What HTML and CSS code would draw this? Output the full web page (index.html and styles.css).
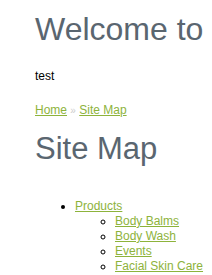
FILE: index.html
```html
<!DOCTYPE html>
<html>
<head>
<meta charset="utf-8">
<link rel="stylesheet" href="styles.css">
</head>
<body>
<div class="page">
  <h1 class="title">Welcome to</h1>
  <p class="intro">test</p>
  <div class="crumbs"><a href="#">Home</a> <span class="sep">»</span> <a href="#">Site Map</a></div>
  <h1 class="title title-map">Site Map</h1>
  <ul class="map">
    <li><a href="#">Products</a>
      <ul class="sub">
        <li><a href="#">Body Balms</a></li>
        <li><a href="#">Body Wash</a></li>
        <li><a href="#">Events</a></li>
        <li><a href="#">Facial Skin Care</a></li>
      </ul>
    </li>
  </ul>
</div>
</body>
</html>
```

FILE: styles.css
```css
html, body {
  margin: 0;
  padding: 0;
  background: #ffffff;
}
body {
  font-family: "Liberation Sans", Arial, sans-serif;
  font-size: 12px;
  color: #000000;
  overflow: hidden;
}
.page {
  padding: 11px 0 0 35px;
  white-space: nowrap;
}
.title {
  margin: 0;
  font-weight: normal;
  font-size: 32px;
  line-height: 36px;
  color: #5a6670;
}
.intro {
  margin: 22px 0 0;
  line-height: 14px;
}
.crumbs {
  margin-top: 20px;
  line-height: 14px;
}
a {
  color: #8db33b;
  text-decoration: underline;
}
.sep {
  color: #cccccc;
  font-size: 10px;
}
.title-map {
  margin-top: 14px;
  font-size: 31px;
  line-height: 34px;
}
.map {
  margin: 33px 0 0;
  padding-left: 40px;
  line-height: 15px;
}
.sub {
  margin: 0;
  padding-left: 40px;
  list-style: circle;
}
```
